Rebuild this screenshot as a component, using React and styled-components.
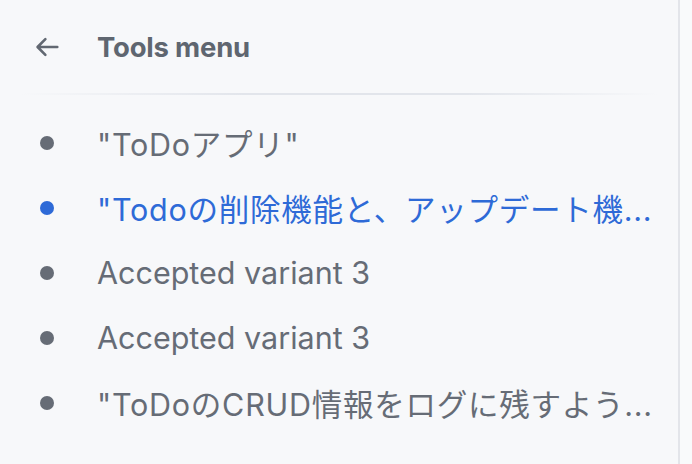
import React from "react";
import styled, { createGlobalStyle } from "styled-components";

const GlobalStyle = createGlobalStyle`
  html, body {
    margin: 0;
    padding: 0;
    background: #f9fafb;
  }
  body {
    font-family: Inter, "Noto Sans CJK JP", sans-serif;
  }
`;

// labels are already cut as the sidebar shows them
const items = [
  { id: 1, label: '"ToDoアプリ"', jp: true },
  { id: 2, label: '"Todoの削除機能と、アップデート機...', jp: true, active: true },
  { id: 3, label: "Accepted variant 3" },
  { id: 4, label: "Accepted variant 3" },
  { id: 5, label: '"ToDoのCRUD情報をログに残すよう...', jp: true },
];

const App = () => {
  return (
    <>
      <GlobalStyle />
      <Panel>
        <Header>
          <BackButton aria-label="back">
            <svg width="26" height="26" viewBox="0 0 24 24" fill="none">
              <path
                d="M21.5 12H3.5M10.5 4.8 3.3 12l7.2 7.2"
                stroke="currentColor"
                strokeWidth="2.4"
                strokeLinecap="round"
                strokeLinejoin="round"
              />
            </svg>
          </BackButton>
          <Title>Tools menu</Title>
        </Header>
        <Divider />
        <List>
          {items.map(({ id, label, active, jp }) => (
            <Item key={id} active={active}>
              <Dot />
              <Label jp={jp}>{label}</Label>
            </Item>
          ))}
        </List>
      </Panel>
    </>
  );
};

export default App;

const Panel = styled.div`
  width: 680px;
  height: 464px;
  box-sizing: border-box;
  background: #f7f8fa;
  border-right: 2px solid #e3e5ea;
  display: flex;
  flex-direction: column;
`;

const Header = styled.div`
  height: 93px;
  display: flex;
  align-items: center;
  padding-left: 34px;
  gap: 37px;
`;

const BackButton = styled.div`
  width: 26px;
  height: 26px;
  display: flex;
  align-items: center;
  justify-content: center;
  color: #626872;
`;

const Title = styled.h1`
  margin: 0;
  font-size: 27.5px;
  font-weight: 700;
  color: #5f6670;
  letter-spacing: -0.2px;
`;

const Divider = styled.div`
  height: 2px;
  margin: 0 20px;
  background: linear-gradient(
    to right,
    rgba(226, 229, 235, 0) 0%,
    #e2e5eb 35%,
    #e2e5eb 70%,
    rgba(226, 229, 235, 0) 100%
  );
`;

const List = styled.ul`
  list-style: none;
  margin: 0;
  padding: 15px 25px 0 40px;
  display: flex;
  flex-direction: column;
`;

const Dot = styled.span`
  flex: 0 0 14px;
  width: 14px;
  height: 14px;
  border-radius: 50%;
  background: currentColor;
`;

const Label = styled.span`
  white-space: nowrap;
  letter-spacing: ${(p) => (p.jp ? "0.75px" : "0")};
`;

const Item = styled.li`
  height: 65px;
  display: flex;
  align-items: center;
  gap: 43px;
  font-size: 30.5px;
  color: ${(p) => (p.active ? "#2e6ad7" : "#666c76")};
`;
